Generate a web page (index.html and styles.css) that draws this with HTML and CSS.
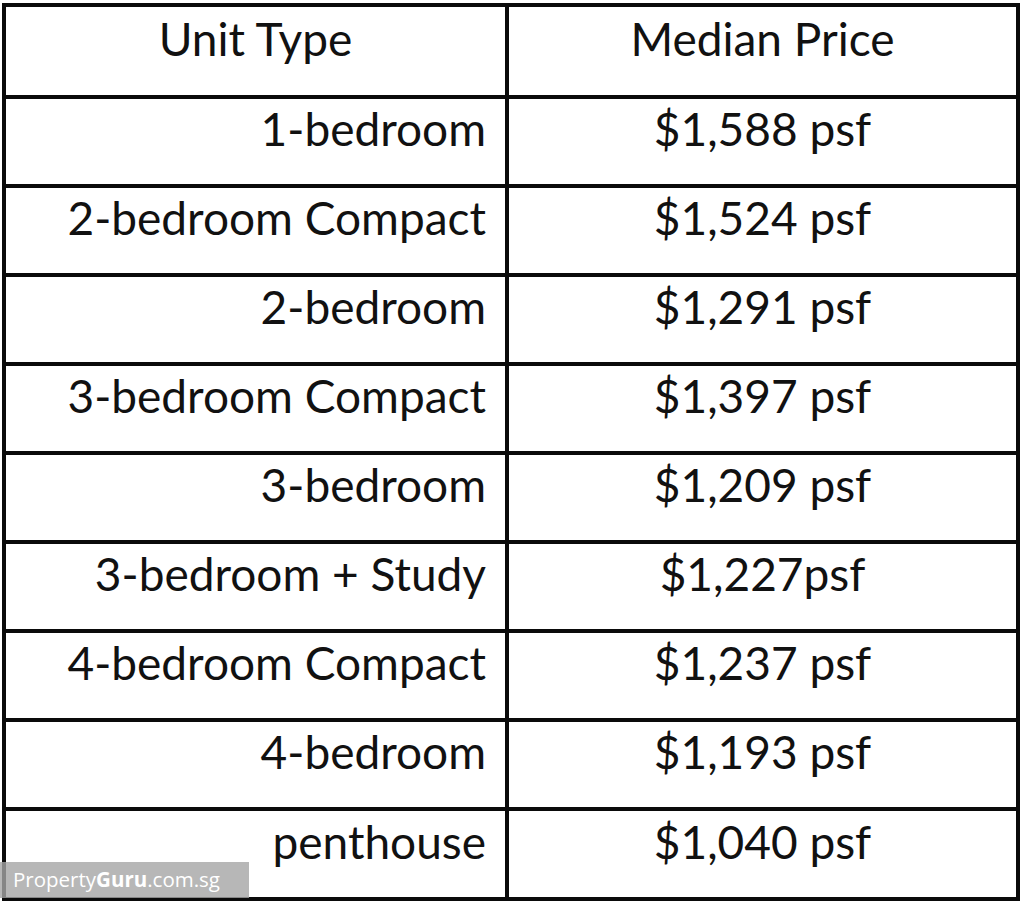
FILE: index.html
```html
<!DOCTYPE html>
<html>
<head>
<meta charset="utf-8">
<link rel="stylesheet" href="styles.css">
</head>
<body>
<div class="frame">
<table class="prices">
  <tr class="head"><td class="unit">Unit Type</td><td class="price">Median Price</td></tr>
  <tr><td class="unit r">1-bedroom</td><td class="price">$1,588 psf</td></tr>
  <tr><td class="unit r">2-bedroom Compact</td><td class="price">$1,524 psf</td></tr>
  <tr><td class="unit r">2-bedroom</td><td class="price">$1,291 psf</td></tr>
  <tr><td class="unit r">3-bedroom Compact</td><td class="price">$1,397 psf</td></tr>
  <tr><td class="unit r">3-bedroom</td><td class="price">$1,209 psf</td></tr>
  <tr><td class="unit r">3-bedroom + Study</td><td class="price">$1,227psf</td></tr>
  <tr><td class="unit r">4-bedroom Compact</td><td class="price">$1,237 psf</td></tr>
  <tr><td class="unit r">4-bedroom</td><td class="price">$1,193 psf</td></tr>
  <tr><td class="unit r">penthouse</td><td class="price">$1,040 psf</td></tr>
</table>
<div class="mark">Property<b>Guru</b>.com.sg</div>
</div>
</body>
</html>
```
FILE: styles.css
```css
html, body {
  margin: 0;
  padding: 0;
  background: #fff;
}
.frame {
  position: relative;
  width: 1024px;
  height: 906px;
  padding: 3px 0 0 2px;
  box-sizing: border-box;
}
.prices {
  border-collapse: separate;
  border-spacing: 0;
  width: 1018px;
  border: 4px solid #0a0a0a;
  font-family: Lato, "Open Sans", sans-serif;
  font-size: 46px;
  color: #111;
}
.prices td {
  padding: 0 19px 26px 19px;
  border-bottom: 4px solid #0a0a0a;
  box-sizing: border-box;
  height: 89px;
}
.prices tr.head td {
  height: 92px;
}
.prices tr:last-child td {
  border-bottom: none;
  height: 86px;
}
.unit {
  width: 503px;
  text-align: center;
  border-right: 4px solid #0a0a0a;
}
.unit.r {
  text-align: right;
}
.price {
  text-align: center;
}
.mark {
  position: absolute;
  left: 0;
  top: 862px;
  width: 249px;
  height: 36px;
  background: rgba(165, 165, 165, 0.8);
  color: #fff;
  font-family: "Open Sans", sans-serif;
  font-size: 20.5px;
  line-height: 35px;
  padding-left: 13px;
  box-sizing: border-box;
}
.mark b {
  font-weight: 700;
}
```
